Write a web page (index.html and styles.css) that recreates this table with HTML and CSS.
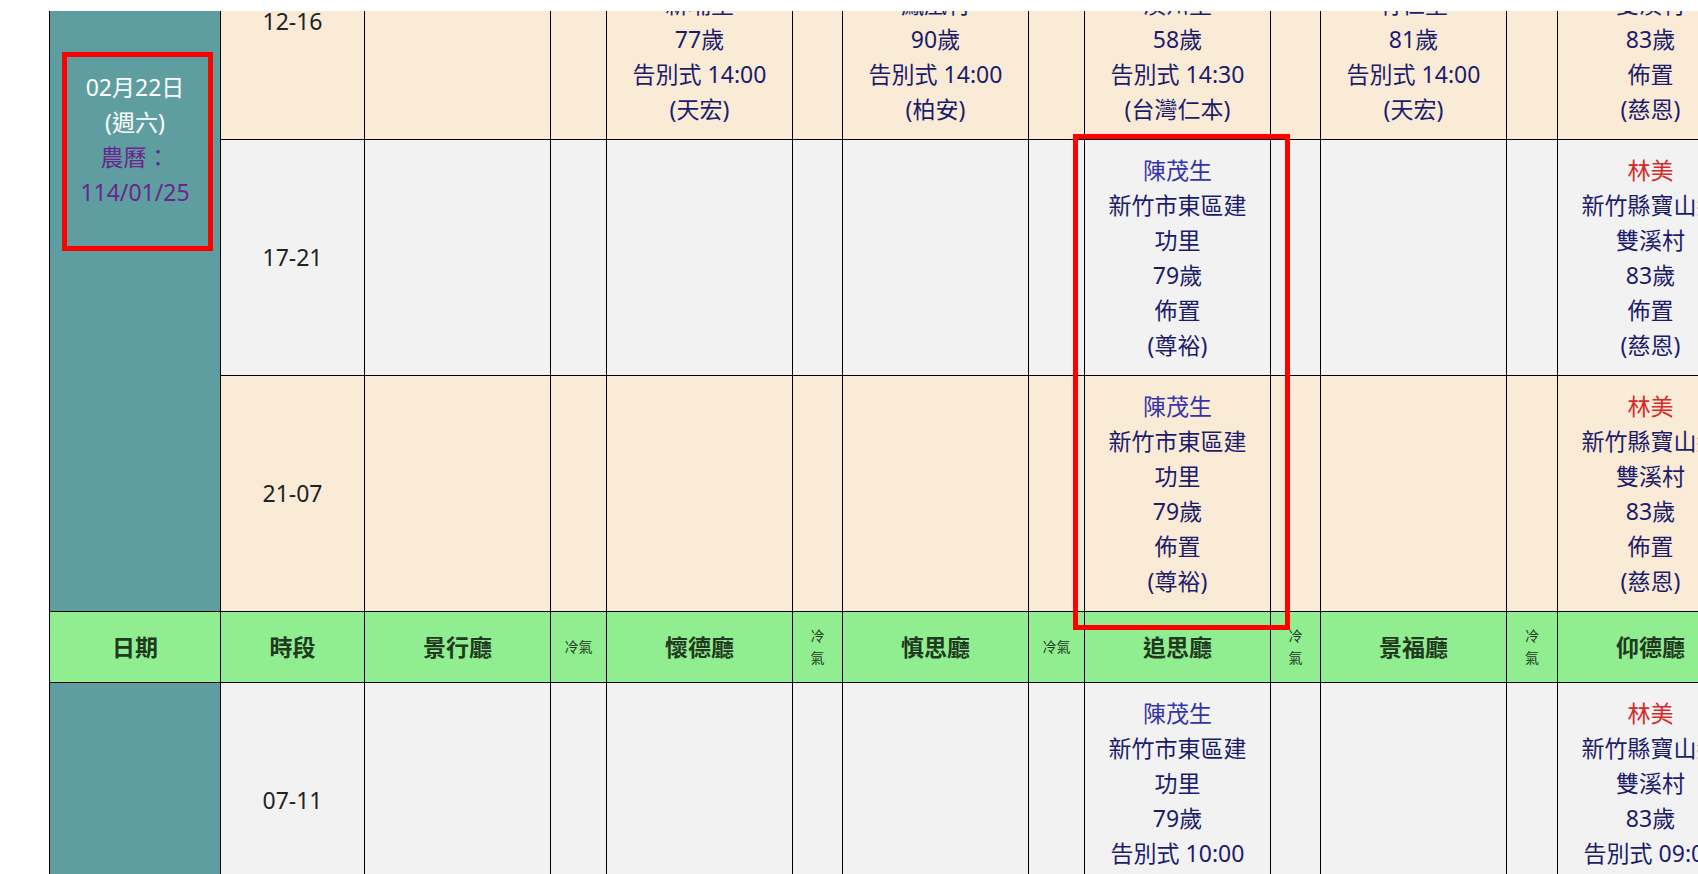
FILE: index.html
```html
<!DOCTYPE html>
<html lang="zh-Hant">

<head>
    <meta charset="UTF-8">
    <meta name="viewport" content="width=device-width, initial-scale=1.0">
    <title>禮廳使用表</title>
    <link rel="stylesheet" href="styles.css">
</head>

<body>
    <div class="top-bar"></div>
    <div class="schedule-wrap">
        <table class="schedule">
            <colgroup>
                <col class="c-date">
                <col class="c-time">
                <col class="c-hall">
                <col class="c-ac">
                <col class="c-hall">
                <col class="c-ac-n">
                <col class="c-hall">
                <col class="c-ac">
                <col class="c-hall">
                <col class="c-ac-n">
                <col class="c-hall">
                <col class="c-ac-n2">
                <col class="c-hall">
                <col class="c-ac">
                <col class="c-hall">
            </colgroup>
            <tbody>
                <!-- 02/22 -->
                <tr class="row-grey">
                    <td class="date" rowspan="4">
                        <div class="date-main">02月22日<br>(週六)</div>
                        <div class="date-lunar">農曆：<br>114/01/25</div>
                    </td>
                    <td class="time">07-11</td>
                    <td></td><td></td>
                    <td></td><td></td>
                    <td></td><td></td>
                    <td></td><td></td>
                    <td></td><td></td>
                    <td></td><td></td>
                    <td></td>
                </tr>
                <tr class="row-cream">
                    <td class="time">12-16</td>
                    <td></td><td></td>
                    <td class="info"><span class="name">彭阿妹</span><br>新竹縣新埔鎮<br>新埔里<br>77歲<br>告別式 14:00<br>(天宏)</td><td></td>
                    <td class="info"><span class="name">范文雄</span><br>新竹縣湖口鄉<br>鳳凰村<br>90歲<br>告別式 14:00<br>(柏安)</td><td></td>
                    <td class="info"><span class="name">李志明</span><br>新竹縣竹北市<br>溪州里<br>58歲<br>告別式 14:30<br>(台灣仁本)</td><td></td>
                    <td class="info"><span class="name">鄭秀英</span><br>新竹縣竹東鎮<br>竹仁里<br>81歲<br>告別式 14:00<br>(天宏)</td><td></td>
                    <td class="info"><span class="name red">林美</span><br>新竹縣寶山鄉雙溪村<br>83歲<br>佈置<br>(慈恩)</td><td></td>
                    <td></td>
                </tr>
                <tr class="row-grey">
                    <td class="time">17-21</td>
                    <td></td><td></td>
                    <td></td><td></td>
                    <td></td><td></td>
                    <td class="info"><span class="name">陳茂生</span><br>新竹市東區建功里<br>79歲<br>佈置<br>(尊裕)</td><td></td>
                    <td></td><td></td>
                    <td class="info"><span class="name red">林美</span><br>新竹縣寶山鄉雙溪村<br>83歲<br>佈置<br>(慈恩)</td><td></td>
                    <td></td>
                </tr>
                <tr class="row-cream">
                    <td class="time">21-07</td>
                    <td></td><td></td>
                    <td></td><td></td>
                    <td></td><td></td>
                    <td class="info"><span class="name">陳茂生</span><br>新竹市東區建功里<br>79歲<br>佈置<br>(尊裕)</td><td></td>
                    <td></td><td></td>
                    <td class="info"><span class="name red">林美</span><br>新竹縣寶山鄉雙溪村<br>83歲<br>佈置<br>(慈恩)</td><td></td>
                    <td></td>
                </tr>
                <tr class="head">
                    <th>日期</th>
                    <th>時段</th>
                    <th>景行廳</th>
                    <th class="ac">冷氣</th>
                    <th>懷德廳</th>
                    <th class="ac"><span class="ac-v">冷氣</span></th>
                    <th>慎思廳</th>
                    <th class="ac">冷氣</th>
                    <th>追思廳</th>
                    <th class="ac"><span class="ac-v">冷氣</span></th>
                    <th>景福廳</th>
                    <th class="ac"><span class="ac-v">冷氣</span></th>
                    <th>仰德廳</th>
                    <th class="ac">冷氣</th>
                    <th>懷恩廳</th>
                </tr>
                <!-- 02/23 -->
                <tr class="row-grey">
                    <td class="date" rowspan="4">
                        <div class="date-main">02月23日<br>(週日)</div>
                        <div class="date-lunar">農曆：<br>114/01/26</div>
                    </td>
                    <td class="time">07-11</td>
                    <td></td><td></td>
                    <td></td><td></td>
                    <td></td><td></td>
                    <td class="info"><span class="name">陳茂生</span><br>新竹市東區建功里<br>79歲<br>告別式 10:00<br>(尊裕)</td><td></td>
                    <td></td><td></td>
                    <td class="info"><span class="name red">林美</span><br>新竹縣寶山鄉雙溪村<br>83歲<br>告別式 09:00<br>(慈恩)</td><td></td>
                    <td></td>
                </tr>
                <tr class="row-cream">
                    <td class="time">12-16</td>
                    <td></td><td></td><td></td><td></td><td></td><td></td>
                    <td></td><td></td><td></td><td></td><td></td><td></td><td></td>
                </tr>
                <tr class="row-grey">
                    <td class="time">17-21</td>
                    <td></td><td></td><td></td><td></td><td></td><td></td>
                    <td></td><td></td><td></td><td></td><td></td><td></td><td></td>
                </tr>
                <tr class="row-cream">
                    <td class="time">21-07</td>
                    <td></td><td></td><td></td><td></td><td></td><td></td>
                    <td></td><td></td><td></td><td></td><td></td><td></td><td></td>
                </tr>
            </tbody>
        </table>
    </div>

    <div class="mark mark-date"></div>
    <div class="mark mark-hall"></div>
</body>

</html>
```

FILE: styles.css
```css
* {
    margin: 0;
    padding: 0;
    box-sizing: border-box;
}

html,
body {
    overflow: hidden;
    background: #fff;
}

body {
    position: relative;
    font-family: "Noto Sans", "Noto Sans CJK TC", sans-serif;
    font-size: 23px;
    line-height: 35px;
    color: #1c1c6b;
}

/* 上方白色條 */
.top-bar {
    position: fixed;
    top: 0;
    left: 0;
    right: 0;
    height: 11px;
    background: #fff;
    z-index: 5;
}

/* 表格捲動後的位置 */
.schedule-wrap {
    margin-top: -333px;
    padding-left: 49px;
}

.schedule {
    table-layout: fixed;
    border-collapse: collapse;
    width: 1936px;
}

.c-date {
    width: 171px;
}

.c-time {
    width: 144px;
}

.c-hall {
    width: 186px;
}

.c-ac {
    width: 56px;
}

.c-ac-n {
    width: 50px;
}

.c-ac-n2 {
    width: 51px;
}

.schedule td,
.schedule th {
    border: 1px solid #000;
    text-align: center;
    vertical-align: middle;
    padding: 0 16px;
}

.row-grey td {
    background: #f2f2f2;
    height: 236px;
}

.row-cream td {
    background: #faebd7;
    height: 236px;
}

.schedule td.date {
    background: #5f9ea0;
    color: #fff;
}

.date-lunar {
    color: #6a2590;
}

.schedule td.time {
    color: #222;
}

.name {
    color: #3535a8;
}

.name.red {
    color: #d42a2a;
}

.head th {
    height: 71px;
    background: #90ee90;
    color: #1f3a1f;
    font-weight: bold;
    font-size: 23px;
}

.head th.ac {
    padding: 0;
    font-weight: normal;
    font-size: 14px;
    line-height: 22px;
}

.ac-v {
    display: inline-block;
    width: 1em;
    vertical-align: middle;
}

/* 紅框標記 */
.mark {
    position: absolute;
    border: 5px solid #f00;
    z-index: 4;
}

.mark-date {
    left: 62px;
    top: 52px;
    width: 151px;
    height: 199px;
}

.mark-hall {
    left: 1073px;
    top: 134px;
    width: 217px;
    height: 496px;
}
```
